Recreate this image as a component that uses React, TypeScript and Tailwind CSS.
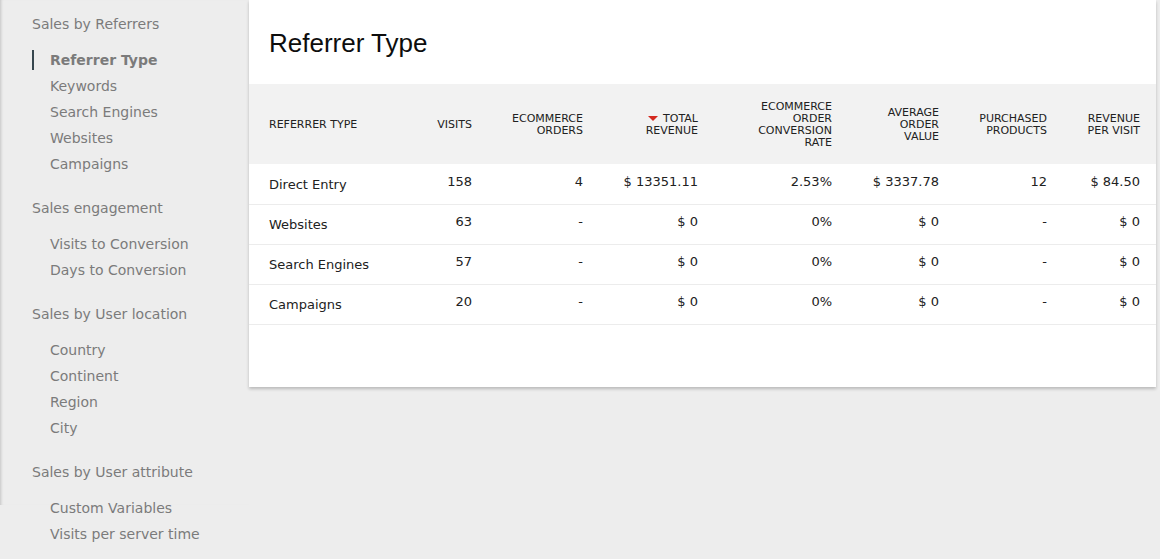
import React from "react";

type Group = { title: string; items: string[] };

const groups: Group[] = [
  { title: "Sales by Referrers", items: ["Referrer Type", "Keywords", "Search Engines", "Websites", "Campaigns"] },
  { title: "Sales engagement", items: ["Visits to Conversion", "Days to Conversion"] },
  { title: "Sales by User location", items: ["Country", "Continent", "Region", "City"] },
  { title: "Sales by User attribute", items: ["Custom Variables", "Visits per server time"] },
];

const rows = [
  ["Direct Entry", "158", "4", "$ 13351.11", "2.53%", "$ 3337.78", "12", "$ 84.50"],
  ["Websites", "63", "-", "$ 0", "0%", "$ 0", "-", "$ 0"],
  ["Search Engines", "57", "-", "$ 0", "0%", "$ 0", "-", "$ 0"],
  ["Campaigns", "20", "-", "$ 0", "0%", "$ 0", "-", "$ 0"],
];

const widths = [147, 88, 112, 114, 134, 107, 108, 97];

export default function App() {
  return (
    <div
      className="flex w-[1160px] h-[559px] overflow-hidden bg-[#ededed]"
      style={{ fontFamily: '"DejaVu Sans", Verdana, sans-serif' }}
    >
      <div className="w-[249px] shrink-0">
        <div className="h-[505px] shadow-[inset_3px_0_3px_-2px_rgba(0,0,0,0.18)] pt-[11px]">
          {groups.map((g, gi) => (
            <div key={g.title} className={gi > 0 ? "mt-[18px]" : ""}>
              <div className="pl-[32px] h-[26px] leading-[26px] text-[14px] text-[#7b7b7b]">{g.title}</div>
              <div className="mt-[10px]">
                {g.items.map((it) => {
                  const active = it === "Referrer Type";
                  return (
                    <div key={it} className="pl-[32px] h-[26px] flex items-center">
                      <span
                        className={
                          "border-l-2 pl-[16px] leading-[20px] text-[14px] " +
                          (active ? "border-[#37474f] font-bold text-[#7b7b7b]" : "border-transparent text-[#7b7b7b]")
                        }
                      >
                        {it}
                      </span>
                    </div>
                  );
                })}
              </div>
            </div>
          ))}
        </div>
      </div>
      <div className="w-[907px] h-[387px] shrink-0 bg-white shadow-[0_2px_3px_rgba(0,0,0,0.22)]">
        <div className="h-[84px] pl-[20px] pt-[28px]">
          <h2 className="text-[26px] leading-[30px] text-[#0d0d0d]" style={{ fontFamily: '"Liberation Sans", Arial, sans-serif' }}>
            Referrer Type
          </h2>
        </div>
        <table className="table-fixed border-collapse w-[907px]">
          <colgroup>
            {widths.map((w, i) => (
              <col key={i} style={{ width: w }} />
            ))}
          </colgroup>
          <thead>
            <tr className="h-[80px] bg-[#f2f2f2] text-[11px] leading-[12px] text-[#212121] uppercase">
              <th className="text-left font-normal pl-[20px] pt-[2px] align-middle">Referrer Type</th>
              <th className="text-right font-normal pr-[12px] pt-[2px] align-middle">Visits</th>
              <th className="text-right font-normal pr-[13px] pt-[2px] align-middle">
                Ecommerce
                <br />
                Orders
              </th>
              <th className="text-right font-normal pr-[12px] pt-[2px] align-middle">
                <span className="inline-block mr-[5px] mb-[2px] w-0 h-0 border-l-[5px] border-r-[5px] border-t-[5px] border-l-transparent border-r-transparent border-t-[#d4291f] align-middle" />
                Total
                <br />
                Revenue
              </th>
              <th className="text-right font-normal pr-[12px] pt-[2px] align-middle">
                Ecommerce
                <br />
                Order
                <br />
                Conversion
                <br />
                Rate
              </th>
              <th className="text-right font-normal pr-[12px] pt-[2px] align-middle">
                Average
                <br />
                Order
                <br />
                Value
              </th>
              <th className="text-right font-normal pr-[12px] pt-[2px] align-middle">
                Purchased
                <br />
                Products
              </th>
              <th className="text-right font-normal pr-[16px] pt-[2px] align-middle">
                Revenue
                <br />
                Per Visit
              </th>
            </tr>
          </thead>
          <tbody>
            {rows.map((r) => (
              <tr key={r[0]} className="h-[40px] border-b border-[#ececec] text-[13px] text-[#212121]">
                <td className="pl-[20px] align-middle pt-[2px]">{r[0]}</td>
                {r.slice(1).map((v, i) => (
                  <td
                    key={i}
                    className={"text-right align-middle pb-[4px] " + (i === 1 ? "pr-[13px]" : i === 6 ? "pr-[16px]" : "pr-[12px]")}
                  >
                    {v}
                  </td>
                ))}
              </tr>
            ))}
          </tbody>
        </table>
      </div>
    </div>
  );
}
